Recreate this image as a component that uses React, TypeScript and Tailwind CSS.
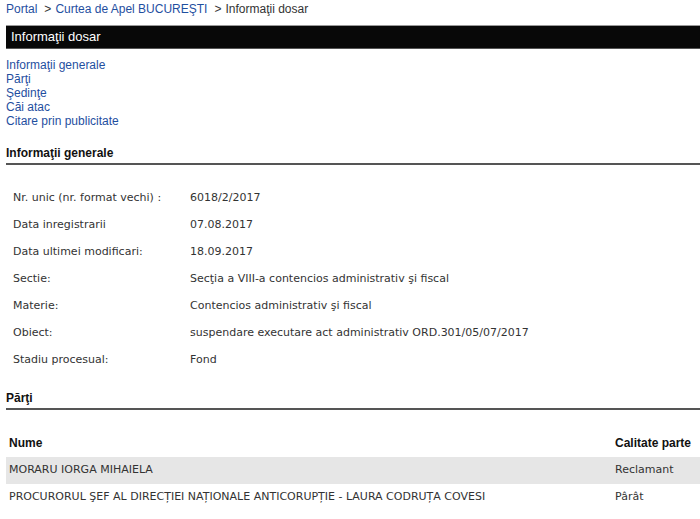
const info: [string, string][] = [
  ["Nr. unic (nr. format vechi) :", "6018/2/2017"],
  ["Data inregistrarii", "07.08.2017"],
  ["Data ultimei modificari:", "18.09.2017"],
  ["Sectie:", "Secţia a VIII-a contencios administrativ şi fiscal"],
  ["Materie:", "Contencios administrativ şi fiscal"],
  ["Obiect:", "suspendare executare act administrativ ORD.301/05/07/2017"],
  ["Stadiu procesual:", "Fond"],
];

const parti: [string, string][] = [
  ["MORARU IORGA MIHAIELA", "Reclamant"],
  ["PROCURORUL ŞEF AL DIRECȚIEI NAȚIONALE ANTICORUPȚIE - LAURA CODRUȚA COVESI", "Pârât"],
];

const links = ["Informaţii generale", "Părţi", "Şedinţe", "Căi atac", "Citare prin publicitate"];

function SectionTitle({ children }: { children: string }) {
  return (
    <div className="border-b-2 border-[#555] pb-[3px] text-[12px] font-bold leading-[14px] text-[#111]">
      {children}
    </div>
  );
}

export default function App() {
  return (
    <div className="min-h-[519px] w-[700px] overflow-hidden bg-white pl-[6px] pt-[2px] font-['Liberation_Sans',Arial,sans-serif]">
      {/* Breadcrumb */}
      <div className="text-[12px] leading-[14px] text-[#333]">
        <a className="text-[#1f4f9f]">Portal</a>
        <span className="ml-[7px] mr-[4px]">&gt;</span>
        <a className="text-[#1f4f9f]">Curtea de Apel BUCUREŞTI</a>
        <span className="ml-[7px] mr-[4px]">&gt;</span>
        <span>Informaţii dosar</span>
      </div>

      {/* Title bar */}
      <div className="mt-[9px] h-[24px] border-t border-b border-t-[#999] border-b-[#555] bg-[#080808] pl-[5px] text-[13px] leading-[22px] text-white">
        Informaţii dosar
      </div>

      {/* Anchors */}
      <div className="mt-[9px] flex flex-col text-[12px] leading-[14px] text-[#1f4f9f]">
        {links.map((l) => (
          <a key={l}>{l}</a>
        ))}
      </div>

      <div className="mt-[18px]">
        <SectionTitle>Informaţii generale</SectionTitle>
      </div>

      <div className="mt-[20px] font-['DejaVu_Sans',Verdana,sans-serif] text-[11px] text-[#333]">
        {info.map(([k, v]) => (
          <div key={k} className="flex h-[27px] items-center pl-[7px]">
            <div className="w-[177px] shrink-0">{k}</div>
            <div className="whitespace-nowrap">{v}</div>
          </div>
        ))}
      </div>

      <div className="mt-[17px]">
        <SectionTitle>Părţi</SectionTitle>
      </div>

      <div className="mt-[16px]">
        <div className="flex h-[31px] items-end pb-[7px] pl-[3px] text-[12px] font-bold leading-[14px] text-[#111]">
          <div className="flex-1">Nume</div>
          <div className="w-[85px] shrink-0">Calitate parte</div>
        </div>
        {parti.map(([n, c], i) => (
          <div
            key={n}
            className={`flex h-[27px] items-center pl-[3px] font-['DejaVu_Sans',Verdana,sans-serif] text-[11px] text-[#333] ${
              i % 2 === 0 ? "bg-[#e6e6e6]" : ""
            }`}
          >
            <div className="flex-1 whitespace-nowrap">{n}</div>
            <div className="w-[85px] shrink-0">{c}</div>
          </div>
        ))}
      </div>
    </div>
  );
}
